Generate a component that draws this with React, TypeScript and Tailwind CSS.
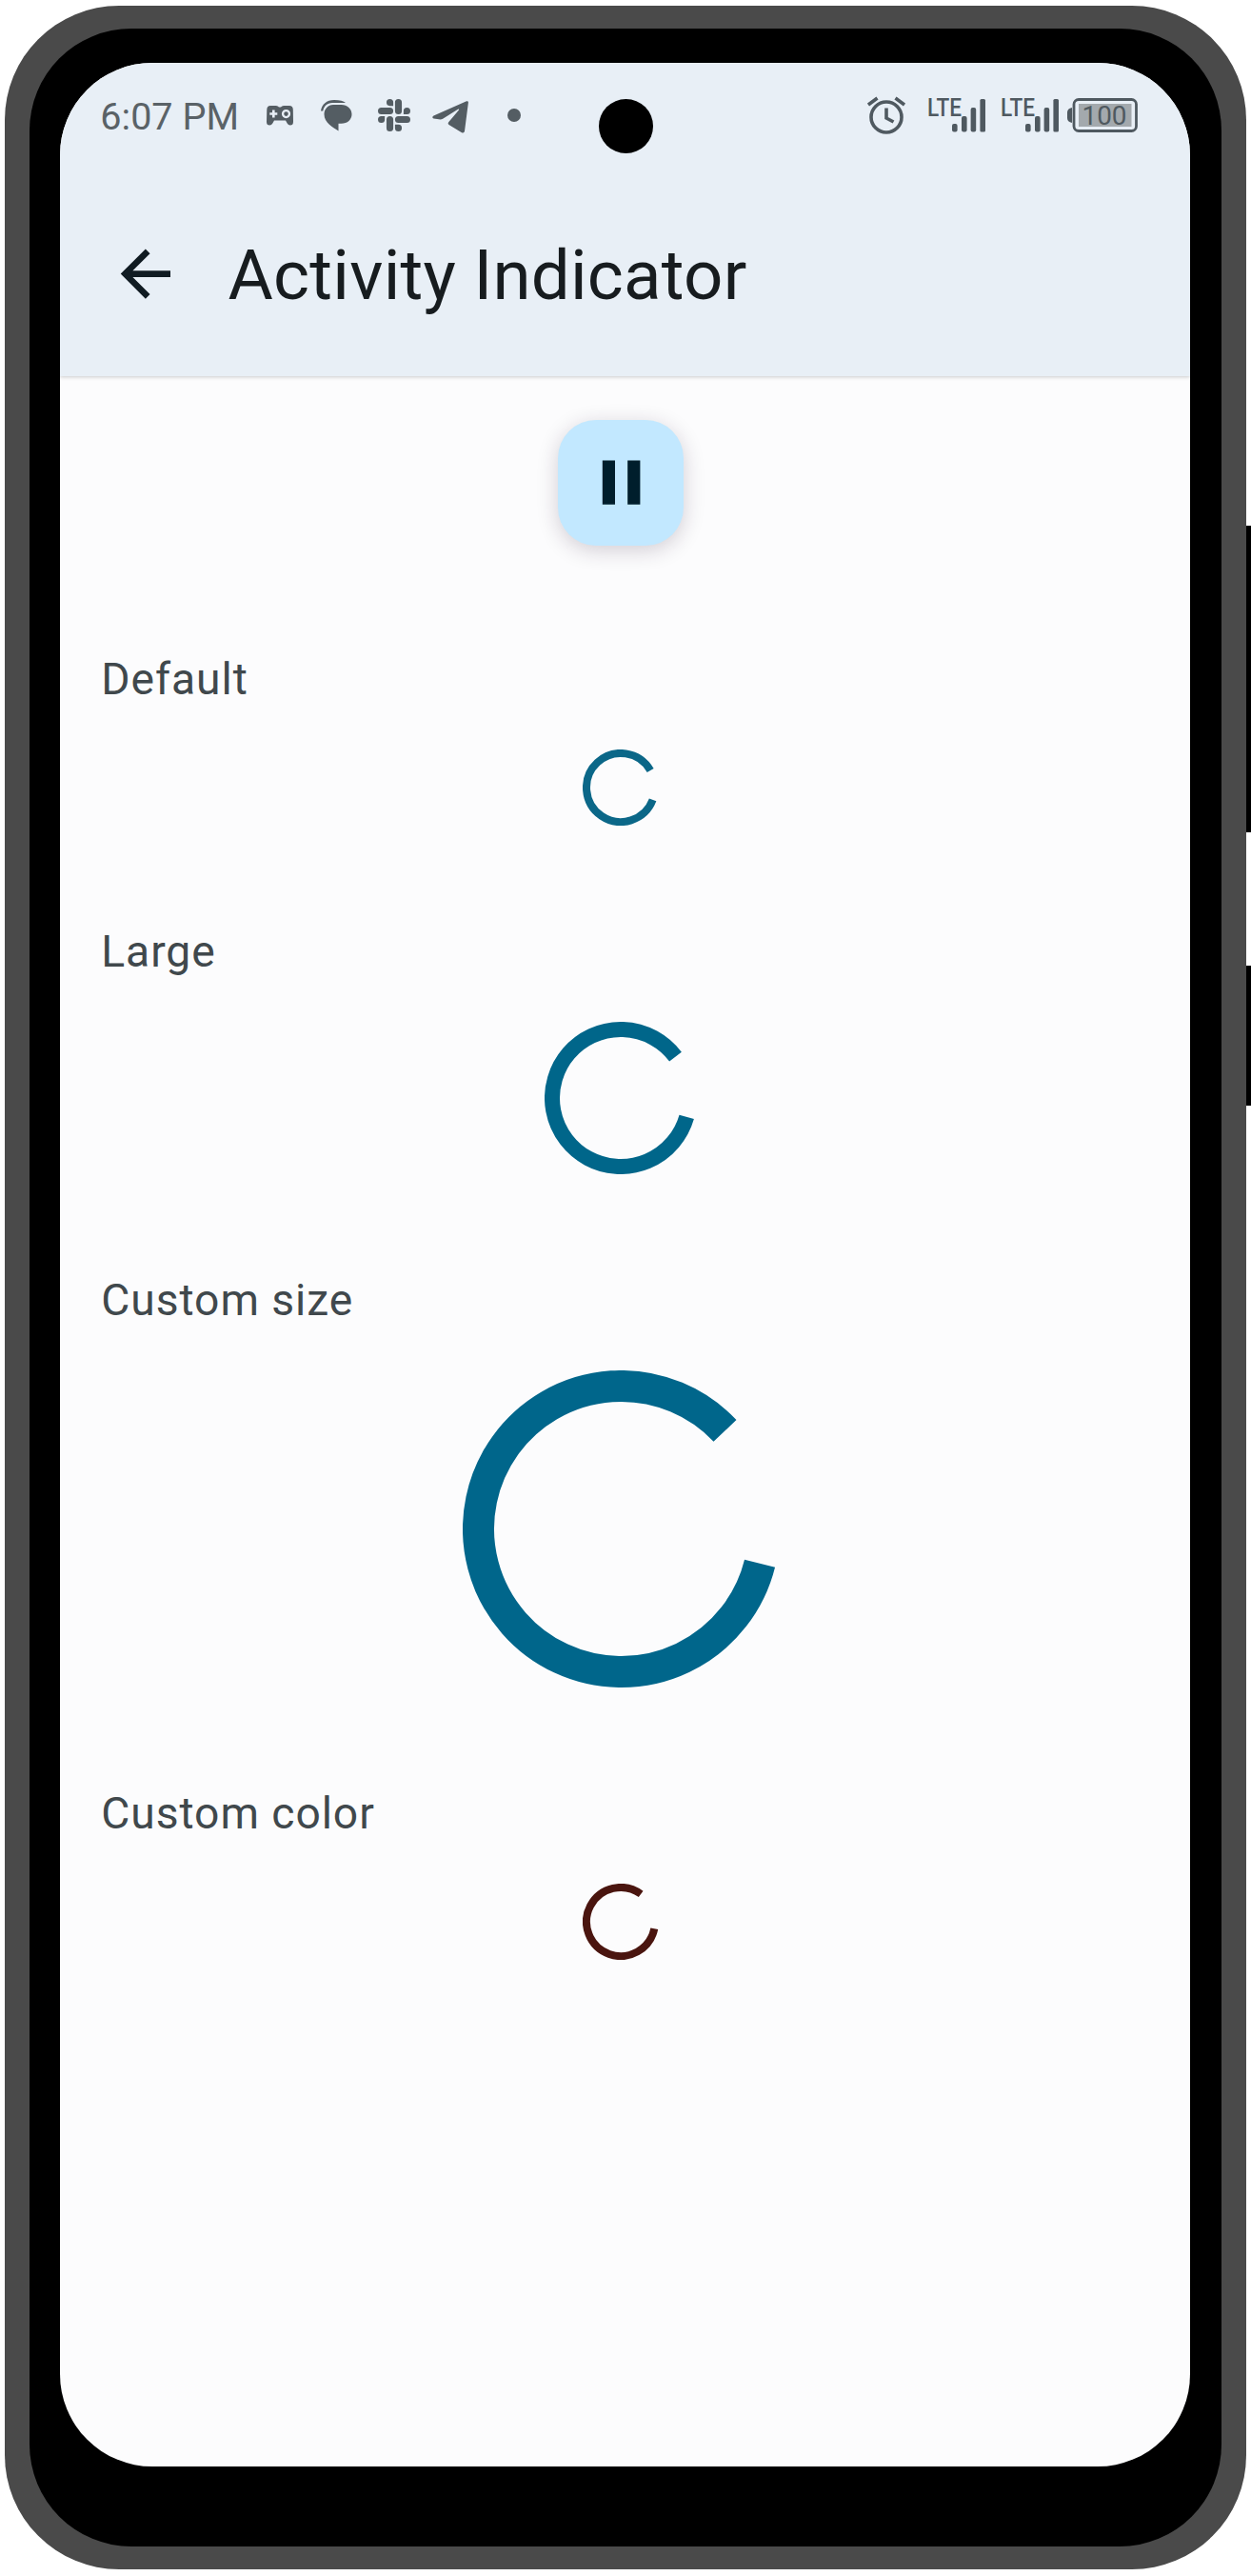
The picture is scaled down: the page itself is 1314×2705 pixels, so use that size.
import React from "react";

type SpinnerProps = {
  size: number;
  stroke: number;
  color: string;
  /** Angles in degrees, clockwise from three o'clock. */
  from: number;
  to: number;
};

function Spinner({ size, stroke, color, from, to }: SpinnerProps) {
  const c = size / 2;
  const r = (size - stroke) / 2;
  const point = (deg: number) => {
    const a = (deg * Math.PI) / 180;
    return `${(c + r * Math.cos(a)).toFixed(2)} ${(c + r * Math.sin(a)).toFixed(2)}`;
  };
  return (
    <svg width={size} height={size} viewBox={`0 0 ${size} ${size}`} fill="none" className="block shrink-0">
      <path d={`M${point(from)}A${r} ${r} 0 1 1 ${point(to)}`} stroke={color} strokeWidth={stroke} />
    </svg>
  );
}

function Section({ label, children }: { label: string; children: React.ReactNode }) {
  return (
    <section className="mb-[99px] flex flex-col items-center gap-[41px]">
      <h2 className="h-[66px] w-full pl-[43px] text-[46.2px] leading-[66px] font-normal tracking-[0.95px] text-[#40484c]">
        {label}
      </h2>
      {children}
    </section>
  );
}

function Signal() {
  return (
    <svg width="61" height="50" viewBox="0 -6 61 50" fill="#4f5960" className="block shrink-0 overflow-visible">
      <text
        x="0"
        y="20"
        fontSize="25.5"
        fontWeight="500"
        fontFamily="Roboto, sans-serif"
        textLength="36"
        lengthAdjust="spacingAndGlyphs"
      >
        LTE
      </text>
      <rect x="26" y="28" width="5.6" height="8.5" rx="2" />
      <rect x="36" y="20" width="5.6" height="16.5" rx="2" />
      <rect x="45.6" y="11" width="5.6" height="25.5" rx="2" />
      <rect x="55.4" y="2" width="5.6" height="34.5" rx="1.5" />
    </svg>
  );
}

function StatusBar() {
  return (
    <div className="flex h-[110px] items-center pr-[54px] pl-[42px] text-[#545d63]">
      <span className="mt-[3px] w-[146px] text-[39.6px] leading-none whitespace-nowrap text-[#5a6267]">6:07 PM</span>

      <svg width="28" height="21" viewBox="0 0 28 21" fill="currentColor" className="ml-[29px] block shrink-0">
        <path
          fillRule="evenodd"
          d="M4 0h6q2 0 3 1.5h2Q16 0 18 0h6q3.6 0 3.8 4l.2 13q0 3.5-3.2 3.5-2 0-3.3-2.3L20 15.5H8l-1.5 2.7Q5.200 20.500 3.200 20.500 0 20.500 0 17L.3 4Q.5 0 4 0ZM6 4.500v2.700H3.300v2.600H6v2.700h2.600V9.800h2.700V7.200H8.600V4.500ZM20.500 4a4.600 4.600 0 1 0 0 9.200 4.600 4.600 0 0 0 0-9.200Zm0 2.300a2.300 2.300 0 1 1 0 4.600 2.300 2.300 0 0 1 0-4.600Z"
        />
      </svg>

      <svg width="33" height="33" viewBox="0 0 33 33" fill="currentColor" className="ml-[29px] block shrink-0">
        <path d="M0 11.500C1 4.500 6 0 14 0c6 0 10 1 12 3H12C6.500 3.500 3 6.500 2.300 11.500Z" />
        <path d="M13 5h8.500C28 5 32.500 9.500 32.500 15S28 24.800 21.500 24.800H18.500V32.500C13 29 3.500 24 3.500 15 3.500 9.500 7.500 5 13 5Z" />
      </svg>

      <svg width="34" height="34" viewBox="0 0 24 24" fill="currentColor" className="ml-[27px] block shrink-0">
        <path d="M5.042 15.165a2.528 2.528 0 0 1-2.520 2.523A2.528 2.528 0 0 1 0 15.165a2.527 2.527 0 0 1 2.522-2.520h2.520v2.520zM6.313 15.165a2.527 2.527 0 0 1 2.521-2.520 2.527 2.527 0 0 1 2.521 2.520v6.313A2.528 2.528 0 0 1 8.834 24a2.528 2.528 0 0 1-2.521-2.522v-6.313zM8.834 5.042a2.528 2.528 0 0 1-2.521-2.520A2.528 2.528 0 0 1 8.834 0a2.528 2.528 0 0 1 2.521 2.522v2.520H8.834zM8.834 6.313a2.528 2.528 0 0 1 2.521 2.521 2.528 2.528 0 0 1-2.521 2.521H2.522A2.528 2.528 0 0 1 0 8.834a2.528 2.528 0 0 1 2.522-2.521h6.312zM18.956 8.834a2.528 2.528 0 0 1 2.522-2.521A2.528 2.528 0 0 1 24 8.834a2.528 2.528 0 0 1-2.522 2.521h-2.522V8.834zM17.688 8.834a2.528 2.528 0 0 1-2.523 2.521 2.527 2.527 0 0 1-2.520-2.521V2.522A2.527 2.527 0 0 1 15.165 0a2.528 2.528 0 0 1 2.523 2.522v6.312zM15.165 18.956a2.528 2.528 0 0 1 2.523 2.522A2.528 2.528 0 0 1 15.165 24a2.527 2.527 0 0 1-2.520-2.522v-2.522h2.520zM15.165 17.688a2.527 2.527 0 0 1-2.520-2.523 2.526 2.526 0 0 1 2.520-2.520h6.313A2.527 2.527 0 0 1 24 15.165a2.528 2.528 0 0 1-2.522 2.523h-6.313z" />
      </svg>

      <svg width="38" height="34" viewBox="0 0 38 34" fill="currentColor" className="mt-[3px] ml-[23px] block shrink-0">
        <path d="M1.500 15.500 36 .3Q38-.3 37.900 1.800L34 31.800Q33.500 34.300 31 33.300L17.500 25Q16 23.800 17.200 22.300L28 9.500Q28.500 8 27 8.800L11.500 18.500Q9.500 19.700 7 19.300L1.500 18.500Q-.9 17.300 1.500 15.500Z" />
      </svg>

      <span className="ml-[41px] size-[14px] shrink-0 rounded-full bg-[#545d63]" />

      <svg
        width="40"
        height="40"
        viewBox="0 0 40 40"
        fill="none"
        stroke="#4f5960"
        strokeWidth="3.6"
        className="ml-auto block shrink-0"
      >
        <circle cx="20" cy="22" r="16" />
        <path d="M20 12.500V23l7.500 4M10.500 2 1 9M29.500 2 39 9" />
      </svg>
      <div className="ml-[23px] flex gap-[15.500px]">
        <Signal />
        <Signal />
      </div>
      <svg width="75" height="36" viewBox="0 0 75 36" fill="none" className="ml-[9.500px] block shrink-0">
        <path d="M5 10v16Q0 25 0 21v-6Q0 11 5 10Z" fill="#4f5960" />
        <rect x="7" y="1.500" width="65.500" height="33" rx="5" stroke="#4f5960" strokeWidth="2.800" />
        <rect x="12" y="6" width="55.500" height="24" fill="#a3a9ad" />
        <text
          x="15.500"
          y="28"
          fontSize="28"
          fontFamily="Roboto, sans-serif"
          fill="#4f5960"
          textLength="47"
          lengthAdjust="spacingAndGlyphs"
        >
          100
        </text>
      </svg>
    </div>
  );
}

export default function App() {
  return (
    <div className="relative h-[2705px] w-[1314px] overflow-hidden bg-white pt-[5.500px] pl-[4.500px] font-['Roboto',sans-serif]">
      {/* Side buttons */}
      <div className="absolute top-[551.500px] left-[1300px] h-[322px] w-[20px] bg-black" />
      <div className="absolute top-[1014px] left-[1300px] h-[147px] w-[20px] bg-black" />

      {/* Bezel */}
      <div className="relative h-[2692.500px] w-[1304.500px] rounded-[120px] bg-[#4a4a4a] px-[26.300px] pt-[24.500px]">
        <div className="h-[2644px] rounded-[107px] bg-black px-[32.500px] pt-[36px]">
          <div className="h-[2523.500px] overflow-hidden rounded-[97px] bg-[#fcfcfd]">
            <header className="h-[328.500px] bg-[#e8eff6] shadow-[0_1px_4px_rgba(0,0,0,0.2)]">
              <StatusBar />
              <div className="flex items-center pt-[72px]">
                <svg width="79.200" height="79.200" viewBox="0 0 24 24" fill="#101b22" className="ml-[50px] block shrink-0">
                  <path d="M20 11v2H8l5.500 5.500-1.420 1.420L4.160 12l7.920-7.920L13.500 5.500 8 11h12Z" />
                </svg>
                <h1 className="mt-[5px] ml-[47px] text-[72.600px] leading-none font-normal tracking-[0.250px] whitespace-nowrap text-[#171c1f]">
                  Activity Indicator
                </h1>
              </div>
            </header>

            <main className="flex flex-col pr-[9px] pt-[46.500px]">
              <button
                aria-label="Pause"
                className="mb-[107px] flex size-[132px] items-center justify-center self-center rounded-[40px] bg-[#c2e8ff] shadow-[0_5px_22px_rgba(40,20,50,0.2)]"
              >
                <svg width="79.200" height="79.200" viewBox="0 0 24 24" fill="#001e2c" className="block">
                  <path d="M14 19h4V5h-4M6 19h4V5H6Z" />
                </svg>
              </button>

              <Section label="Default">
                <Spinner size={80} stroke={8} color="#0b6788" from={21} to={-30} />
              </Section>
              <Section label="Large">
                <Spinner size={160} stroke={16} color="#00668a" from={16} to={-37} />
              </Section>
              <Section label="Custom size">
                <Spinner size={333} stroke={33} color="#00668b" from={14} to={-43.4} />
              </Section>
              <Section label="Custom color">
                <Spinner size={80} stroke={8} color="#4a150f" from={11.500} to={-54} />
              </Section>
            </main>
          </div>
        </div>
      </div>

      {/* Front camera */}
      <div className="absolute top-[104px] left-[628.500px] size-[57px] rounded-full bg-black" />
    </div>
  );
}
